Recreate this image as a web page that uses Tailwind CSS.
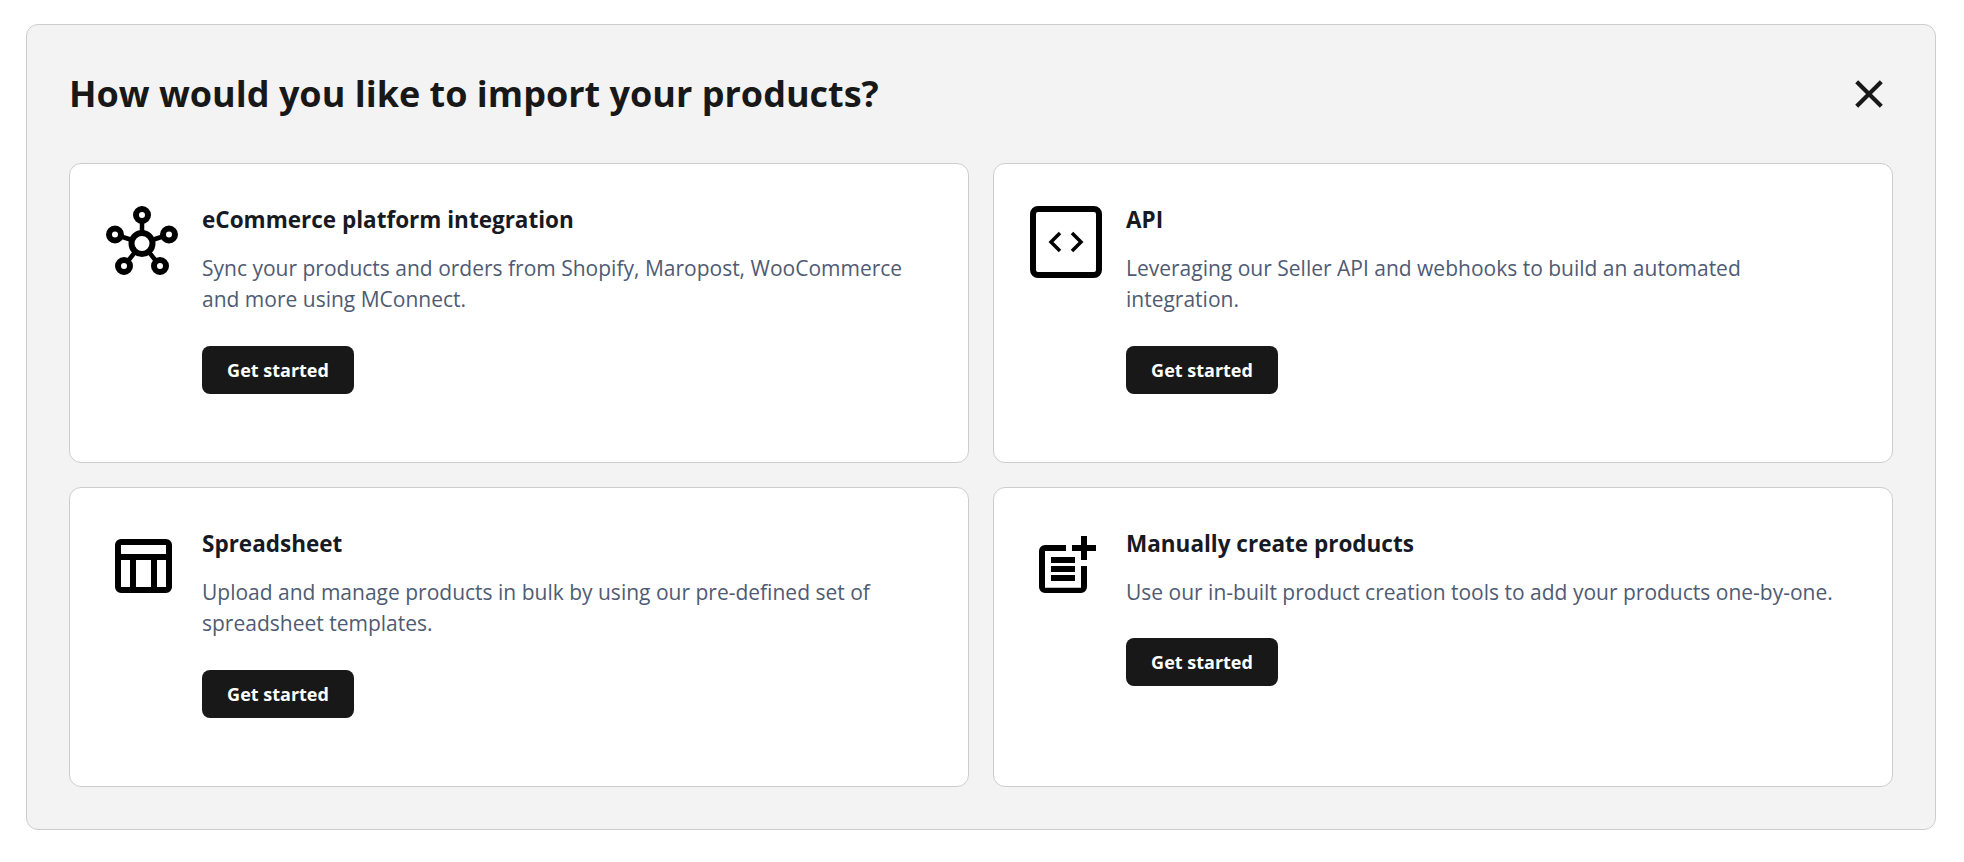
<!DOCTYPE html>
<html lang="en">
  <head>
    <meta charset="UTF-8" />
    <meta name="viewport" content="width=device-width, initial-scale=1.0" />
    <title>Import products</title>
    <script src="https://cdn.jsdelivr.net/npm/@tailwindcss/browser@4"></script>
  </head>
  <body class="bg-white font-['Open_Sans','Noto_Sans',sans-serif]">
    <div class="pt-6 pl-[26px]">
      <section
        class="w-[1910px] h-[806px] rounded-xl border border-[#cdcdcd] bg-[#f3f3f3] px-[42px] pt-[42px]"
      >
        <header class="flex items-center justify-between h-[54px] mb-[42px]">
          <h1 class="text-[36px] leading-[54px] font-bold text-[#181818]">
            How would you like to import your products?
          </h1>
          <button aria-label="Close" class="mr-[10px]">
            <svg
              class="w-7 h-7 text-[#181818]"
              fill="none"
              stroke="currentColor"
              viewBox="0 0 28 28"
            >
              <path
                stroke-width="4.2"
                d="M1.700 1.700L26.300 26.300M26.300 1.700L1.700 26.300"
              ></path>
            </svg>
          </button>
        </header>

        <main class="grid grid-cols-2 gap-6">
          <!-- eCommerce -->
          <div
            class="flex gap-6 h-[300px] rounded-xl border border-[#cdcdcd] bg-white pl-9 pr-[42px] pt-[42px]"
          >
            <svg
              class="w-[72px] h-[72px] shrink-0 text-black"
              fill="none"
              stroke="currentColor"
              viewBox="0 0 72 72"
            >
              <path
                stroke-width="4.5"
                d="M36 15V27M15 30.5L26 34M57 30.5L46 34M22 55L29.500 45.500M50 55L42.500 45.500"
              ></path>
              <g stroke-width="6">
                <circle cx="36" cy="37.500" r="10.500"></circle>
                <circle cx="36" cy="9" r="6"></circle>
                <circle cx="9" cy="28.500" r="6"></circle>
                <circle cx="63" cy="28.500" r="6"></circle>
                <circle cx="18" cy="60" r="6"></circle>
                <circle cx="54" cy="60" r="6"></circle>
              </g>
            </svg>
            <div>
              <h2 class="text-[22.5px] leading-[27px] font-bold text-[#171923]">
                eCommerce platform integration
              </h2>
              <p class="mt-[19.5px] text-[21px] leading-[31px] text-[#4f5b73]">
                Sync your products and orders from Shopify, Maropost,
                WooCommerce and more using MConnect.
              </p>
              <button
                class="mt-[31.5px] w-[152px] h-12 rounded-lg bg-[#181818] text-[18px] font-bold text-white"
              >
                Get started
              </button>
            </div>
          </div>

          <!-- API -->
          <div
            class="flex gap-6 h-[300px] rounded-xl border border-[#cdcdcd] bg-white pl-9 pr-[42px] pt-[42px]"
          >
            <svg
              class="w-[72px] h-[72px] shrink-0 text-black"
              fill="none"
              stroke="currentColor"
              viewBox="0 0 72 72"
            >
              <rect
                x="3"
                y="3"
                width="66"
                height="66"
                rx="5"
                stroke-width="6"
              ></rect>
              <path
                stroke-width="3.5"
                d="M30 27L21 36L30 45M42 27L51 36L42 45"
              ></path>
            </svg>
            <div>
              <h2 class="text-[22.5px] leading-[27px] font-bold text-[#171923]">
                API
              </h2>
              <p class="mt-[19.5px] text-[21px] leading-[31px] text-[#4f5b73]">
                Leveraging our Seller API and webhooks to build an automated
                integration.
              </p>
              <button
                class="mt-[31.5px] w-[152px] h-12 rounded-lg bg-[#181818] text-[18px] font-bold text-white"
              >
                Get started
              </button>
            </div>
          </div>

          <!-- Spreadsheet -->
          <div
            class="flex gap-6 h-[300px] rounded-xl border border-[#cdcdcd] bg-white pl-9 pr-[42px] pt-[42px]"
          >
            <svg
              class="w-[72px] h-[72px] shrink-0 text-black"
              fill="currentColor"
              viewBox="0 0 72 72"
            >
              <path
                fill-rule="evenodd"
                d="M15 9H60a6 6 0 0 1 6 6V57a6 6 0 0 1-6 6H15a6 6 0 0 1-6-6V15a6 6 0 0 1 6-6ZM15 15V24H60V15ZM15 30V57H24V30ZM30 30V57H45V30ZM51 30V57H60V30Z"
              ></path>
            </svg>
            <div>
              <h2 class="text-[22.5px] leading-[27px] font-bold text-[#171923]">
                Spreadsheet
              </h2>
              <p class="mt-[19.5px] text-[21px] leading-[31px] text-[#4f5b73]">
                Upload and manage products in bulk by using our pre-defined set
                of spreadsheet templates.
              </p>
              <button
                class="mt-[31.5px] w-[152px] h-12 rounded-lg bg-[#181818] text-[18px] font-bold text-white"
              >
                Get started
              </button>
            </div>
          </div>

          <!-- Manual -->
          <div
            class="flex gap-6 h-[300px] rounded-xl border border-[#cdcdcd] bg-white pl-9 pr-[42px] pt-[42px]"
          >
            <svg
              class="w-[72px] h-[72px] shrink-0 text-black"
              fill="currentColor"
              viewBox="0 0 72 72"
            >
              <path
                d="M36 15H15a6 6 0 0 0-6 6V57a6 6 0 0 0 6 6H51a6 6 0 0 0 6-6V36H51V57.750H15V21H36ZM51 6H57V15H66V21H57V30H51V21H42V15H51ZM21 27H45V33H21ZM21 36H45V42H21ZM21 45H45V51H21Z"
              ></path>
            </svg>
            <div>
              <h2 class="text-[22.5px] leading-[27px] font-bold text-[#171923]">
                Manually create products
              </h2>
              <p class="mt-[19.5px] text-[21px] leading-[31px] text-[#4f5b73]">
                Use our in-built product creation tools to add your products
                one-by-one.
              </p>
              <button
                class="mt-[30.5px] w-[152px] h-12 rounded-lg bg-[#181818] text-[18px] font-bold text-white"
              >
                Get started
              </button>
            </div>
          </div>
        </main>
      </section>
    </div>
  </body>
</html>
